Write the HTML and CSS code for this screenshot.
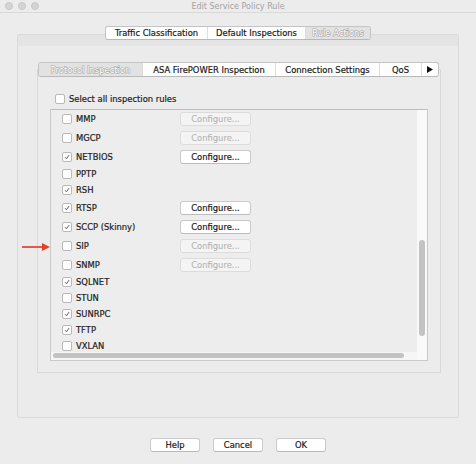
FILE: index.html
```html
<!DOCTYPE html>
<html>
<head>
<meta charset="utf-8">
<link rel="stylesheet" href="styles.css">
</head>
<body>
<div class="titlebar">
  <div class="lights"><span></span><span></span><span></span></div>
  <div class="title">Edit Service Policy Rule</div>
  <div></div>
</div>

<div class="seg-bar top-tabs">
  <div class="seg w-traffic">Traffic Classification</div>
  <div class="seg w-default">Default Inspections</div>
  <div class="seg sel w-rule">Rule Actions</div>
</div>

<div class="outer-panel">
  <div class="seg-bar inner-tabs">
    <div class="seg sel w-proto">Protocol Inspection</div>
    <div class="seg w-asa">ASA FirePOWER Inspection</div>
    <div class="seg w-conn">Connection Settings</div>
    <div class="seg w-qos">QoS</div>
    <div class="seg w-more"><svg width="6" height="7" viewBox="0 0 6 7"><polygon points="0,0 6,3.5 0,7" fill="#111"/></svg></div>
  </div>
  <div class="inner-panel">
    <label class="select-all"><span class="cb"></span>Select all inspection rules</label>
    <div class="listbox">
      <div class="list">
        <div class="row tall"><span class="cb"></span><span class="name">MMP</span><span class="btn dis">Configure...</span></div>
        <div class="row tall"><span class="cb"></span><span class="name">MGCP</span><span class="btn dis">Configure...</span></div>
        <div class="row tall"><span class="cb on"><svg viewBox="0 0 10 10"><polyline points="2.5,5.2 4.3,7.2 7.6,2.6" /></svg></span><span class="name">NETBIOS</span><span class="btn">Configure...</span></div>
        <div class="row"><span class="cb"></span><span class="name">PPTP</span></div>
        <div class="row"><span class="cb on"><svg viewBox="0 0 10 10"><polyline points="2.5,5.2 4.3,7.2 7.6,2.6" /></svg></span><span class="name">RSH</span></div>
        <div class="row tall"><span class="cb on"><svg viewBox="0 0 10 10"><polyline points="2.5,5.2 4.3,7.2 7.6,2.6" /></svg></span><span class="name">RTSP</span><span class="btn">Configure...</span></div>
        <div class="row tall"><span class="cb on"><svg viewBox="0 0 10 10"><polyline points="2.5,5.2 4.3,7.2 7.6,2.6" /></svg></span><span class="name">SCCP (Skinny)</span><span class="btn">Configure...</span></div>
        <div class="row tall"><span class="cb"></span><span class="name">SIP</span><span class="btn dis">Configure...</span></div>
        <div class="row tall"><span class="cb"></span><span class="name">SNMP</span><span class="btn dis">Configure...</span></div>
        <div class="row"><span class="cb on"><svg viewBox="0 0 10 10"><polyline points="2.5,5.2 4.3,7.2 7.6,2.6" /></svg></span><span class="name">SQLNET</span></div>
        <div class="row"><span class="cb"></span><span class="name">STUN</span></div>
        <div class="row"><span class="cb on"><svg viewBox="0 0 10 10"><polyline points="2.5,5.2 4.3,7.2 7.6,2.6" /></svg></span><span class="name">SUNRPC</span></div>
        <div class="row"><span class="cb on"><svg viewBox="0 0 10 10"><polyline points="2.5,5.2 4.3,7.2 7.6,2.6" /></svg></span><span class="name">TFTP</span></div>
        <div class="row"><span class="cb"></span><span class="name">VXLAN</span></div>
      </div>
      <div class="vscroll"><div class="vthumb"></div></div>
      <div class="hscroll"><div class="hthumb"></div></div>
    </div>
  </div>
</div>

<div class="buttons">
  <span class="pbtn">Help</span>
  <span class="pbtn">Cancel</span>
  <span class="pbtn">OK</span>
</div>

<svg class="arrow" width="30" height="10" viewBox="0 0 30 10">
  <line x1="0" y1="5" x2="22" y2="5" stroke="#e4402a" stroke-width="1.7"/>
  <polygon points="20,1 28,5 20,9" fill="#e4402a"/>
</svg>
</body>
</html>
```

FILE: styles.css
```css
* { box-sizing: border-box; }
html, body { margin: 0; padding: 0; }
body {
  width: 476px;
  height: 464px;
  background: #ececec;
  font-family: "DejaVu Sans", "Noto Sans", sans-serif;
  font-size: 8.4px;
  color: #1c1c1c;
  -webkit-text-stroke: 0.2px currentColor;
  position: relative;
  overflow: hidden;
}

/* title bar */
.titlebar {
  height: 13px;
  border-bottom: 1px solid #d9d9d9;
  display: grid;
  grid-template-columns: 1fr auto 1fr;
  align-items: center;
}
.lights { display: flex; gap: 5px; padding-left: 5px; }
.lights span {
  width: 8px; height: 8px; border-radius: 50%;
  background: #d4d4d4;
  border: 1px solid #c8c8c8;
}
.title { color: #a3a3a3; font-size: 8px; -webkit-text-stroke: 0; }

/* segmented controls */
.seg-bar {
  display: flex;
  background: #fff;
  border: 1px solid #c4c4c4;
  border-bottom-color: #b8b8b8;
  border-radius: 3px;
  position: relative;
  z-index: 1;
  overflow: hidden;
}
.seg {
  display: flex; align-items: center; justify-content: center;
  border-left: 1px solid #dcdcdc;
  white-space: nowrap;
  color: #1a1a1a;
}
.seg:first-child { border-left: none; }
.seg.sel {
  background: #e2e2e2;
  color: #ffffff;
  -webkit-text-stroke: 1.1px #a6a6a6;
  paint-order: stroke fill;
}
.top-tabs {
  width: 266px;
  height: 14px;
  margin: 13px 0 -6px 105px;
}
.w-traffic { width: 101px; }
.w-default { width: 98px; }
.w-rule { width: 65px; }

.outer-panel {
  margin-left: 17px;
  width: 442px;
  height: 384px;
  border: 1px solid #dadada;
  border-radius: 2px;
  background: linear-gradient(#e4e4e4 0, #e4e4e4 11px, #ebebeb 11px);
  padding-top: 27px;
}
.inner-tabs {
  width: 401px;
  height: 15px;
  margin: 0 0 -8px 20px;
}
.w-proto { width: 103px; }
.w-asa { width: 133px; }
.w-conn { width: 104px; }
.w-qos { width: 42px; }
.w-more { width: 17px; }

.inner-panel {
  margin-left: 19px;
  width: 404px;
  height: 304px;
  border: 1px solid #d8d8d8;
  background: #ececec;
  padding: 22px 12px 0 12px;
}

.cb {
  width: 10px; height: 10px;
  flex: none;
  background: #fff;
  border: 1px solid #b9b9b9;
  border-radius: 2px;
  display: inline-flex;
  align-items: center;
  justify-content: center;
  -webkit-text-stroke: 0;
}
.cb svg { width: 10px; height: 10px; }
.cb polyline { fill: none; stroke: #4a4a4a; stroke-width: 1.1; }

.select-all {
  display: flex; align-items: center; gap: 4px;
  height: 14px;
  padding-left: 5px;
  margin-bottom: 3px;
}

.listbox {
  width: 378px;
  height: 252px;
  border: 1px solid #c9c9c9;
  border-top-color: #bdbdbd;
  background: #ededed;
  display: grid;
  grid-template-columns: 1fr 10px;
  grid-template-rows: 1fr 8px;
}
.list {
  grid-column: 1;
  grid-row: 1 / span 2;
  overflow: hidden;
  padding-left: 11px;
}
.row {
  height: 16px;
  display: flex;
  align-items: center;
}
.row:first-child { margin-top: -1px; }
.row.tall { height: 19px; }
.row .cb { margin-right: 4px; }
.row .name { width: 104px; }
.btn {
  width: 71px; height: 14px;
  background: #fff;
  border: 1px solid #cacaca;
  border-bottom-color: #bcbcbc;
  border-radius: 3px;
  display: flex; align-items: center; justify-content: center;
  color: #1a1a1a;
}
.btn.dis { background: #f4f4f4; color: #b3b3b3; border-color: #dcdcdc; -webkit-text-stroke: 0.1px currentColor; }

.vscroll {
  grid-column: 2;
  grid-row: 1 / span 2;
  background: #f9f9f9;
  padding: 130px 2px 0 2px;
}
.vthumb {
  width: 6px; height: 96px;
  background: #c3c3c3;
  border-radius: 3px;
}
.hscroll {
  grid-column: 1;
  grid-row: 2;
  background: #f6f6f6;
  position: relative;
  z-index: 1;
  padding: 1px 0 0 2px;
}
.hthumb {
  width: 351px; height: 5px;
  background: #c3c3c3;
  border-radius: 3px;
}

.buttons {
  display: flex;
  justify-content: center;
  gap: 13px;
  margin-top: 20px;
}
.pbtn {
  width: 50px; height: 14px;
  background: #fff;
  border: 1px solid #cbcbcb;
  border-bottom-color: #b9b9b9;
  border-radius: 3px;
  display: flex; align-items: center; justify-content: center;
  color: #1a1a1a;
}

.arrow {
  position: absolute;
  left: 22px;
  top: 242px;
}
```
